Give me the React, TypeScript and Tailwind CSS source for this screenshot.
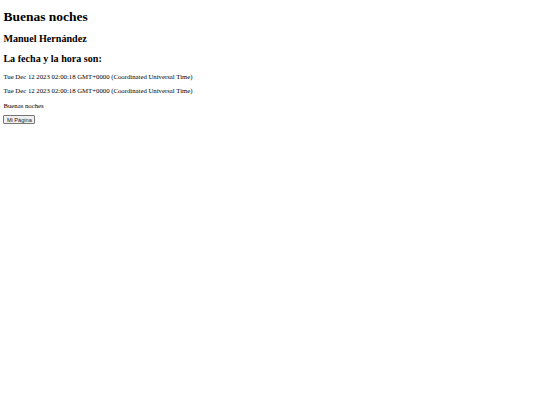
import React from 'react';

const fecha = 'Tue Dec 12 2023 02:00:18 GMT+0000 (Coordinated Universal Time)';

const App = () => {
  return (
    <div className="min-h-screen bg-white text-black px-[3.4px] py-px font-['Liberation_Serif',serif]">
      <h1 className="text-[13.5px] leading-[1.15] font-bold mt-[8px] mb-[8.9px]">Buenas noches</h1>
      <h2 className="text-[10.1px] leading-[1.15] font-bold mb-[8.4px]">Manuel Hernández</h2>
      <h3 className="text-[10.1px] leading-[1.15] font-bold mb-[7.6px]">La fecha y la hora son:</h3>
      <p className="text-[6.75px] leading-[1.15] mb-[6.75px]">{fecha}</p>
      <p className="text-[6.75px] leading-[1.15] mb-[6.75px]">{fecha}</p>
      <p className="text-[6.75px] leading-[1.15]">Buenas noches</p>
      <div className="flex mt-[5.8px]">
        <button className="px-[2.5px] py-[0.4px] text-[5.6px] leading-[1.15] font-['Liberation_Sans',sans-serif] text-[#222] bg-[#efefef] border-[0.5px] border-[#767676] rounded-[1px]">
          Mi Página
        </button>
      </div>
    </div>
  );
};

export default App;
